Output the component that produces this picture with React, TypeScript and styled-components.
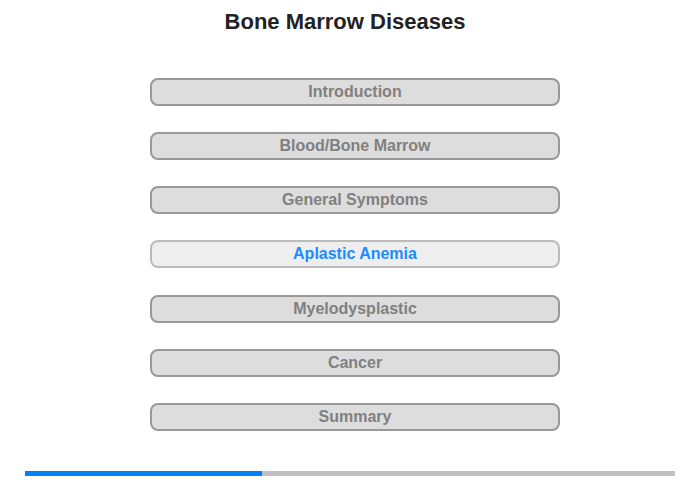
import styled, { createGlobalStyle } from 'styled-components'

const GlobalStyle = createGlobalStyle`
  body {
    margin: 0;
    background: #ffffff;
    font-family: 'Liberation Sans', Arial, sans-serif;
  }
`

const Page = styled.div`
  width: 700px;
  height: 480px;
  display: flex;
  flex-direction: column;
  align-items: center;
`

const Title = styled.h1`
  margin: 9px 10px 0 0;
  height: 26px;
  line-height: 26px;
  font-size: 22px;
  font-weight: 700;
  color: #222222;
`

const Menu = styled.nav`
  margin: 43px 0 0 10px;
  display: flex;
  flex-direction: column;
  gap: 26.16px;
`

const MenuButton = styled.button<{ $active?: boolean }>`
  box-sizing: border-box;
  width: 410px;
  height: 28px;
  padding: 0;
  border: 2px solid ${(p) => (p.$active ? '#bbbbbb' : '#999999')};
  border-radius: 8px;
  background: ${(p) => (p.$active ? '#eeeeee' : '#dddddd')};
  color: ${(p) => (p.$active ? '#1a8cff' : '#808080')};
  font-family: 'Liberation Sans', Arial, sans-serif;
  font-size: 16px;
  font-weight: 700;
  text-align: center;
  cursor: pointer;
`

const Progress = styled.div`
  margin-top: 40px;
  width: 650px;
  height: 5px;
  background: #c0c0c0;
`

const ProgressFill = styled.div`
  height: 100%;
  background: #0080ff;
`

const sections = [
  'Introduction',
  'Blood/Bone Marrow',
  'General Symptoms',
  'Aplastic Anemia',
  'Myelodysplastic',
  'Cancer',
  'Summary',
]

const current = 3

const App: React.FC = () => {
  const fill = (237 / 650) * 100

  return (
    <>
      <GlobalStyle />
      <Page>
        <Title>Bone Marrow Diseases</Title>
        <Menu>
          {sections.map((s, i) => (
            <MenuButton key={s} $active={i === current}>
              {s}
            </MenuButton>
          ))}
        </Menu>
        <Progress>
          <ProgressFill style={{ width: `${fill}%` }} />
        </Progress>
      </Page>
    </>
  )
}

export default App
